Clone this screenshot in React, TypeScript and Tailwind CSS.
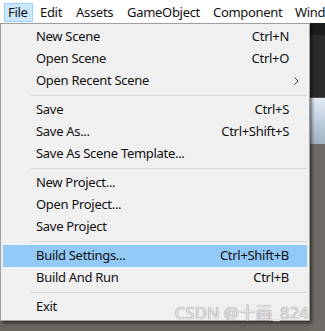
import React from 'react';

type Entry = { label: string; shortcut?: string; sub?: boolean; active?: boolean } | 'sep';

const entries: Entry[] = [
  { label: 'New Scene', shortcut: 'Ctrl+N' },
  { label: 'Open Scene', shortcut: 'Ctrl+O' },
  { label: 'Open Recent Scene', sub: true },
  'sep',
  { label: 'Save', shortcut: 'Ctrl+S' },
  { label: 'Save As...', shortcut: 'Ctrl+Shift+S' },
  { label: 'Save As Scene Template...' },
  'sep',
  { label: 'New Project...' },
  { label: 'Open Project...' },
  { label: 'Save Project' },
  'sep',
  { label: 'Build Settings...', shortcut: 'Ctrl+Shift+B', active: true },
  { label: 'Build And Run', shortcut: 'Ctrl+B' },
  'sep',
  { label: 'Exit' },
];

// menu bar titles with the width each one takes in the bar
const menus = [
  { name: 'File', w: 'w-[29px] mr-[3px]' },
  { name: 'Edit', w: 'w-[36px]' },
  { name: 'Assets', w: 'w-[51px]' },
  { name: 'GameObject', w: 'w-[86px]' },
  { name: 'Component', w: 'w-[82px]' },
  { name: 'Wind', w: 'w-[40px]' },
];

const font = { fontFamily: '"Noto Sans", "Noto Sans CJK SC", sans-serif' };

const App = () => {
  return (
    <div
      className="w-[325px] h-[331px] overflow-hidden flex flex-col bg-[#6b6560] text-[13px] tracking-[-0.3px] text-[#111] relative"
      style={font}
    >
      {/* Menu bar */}
      <div className="h-[23px] bg-white flex items-center pl-[4px] pt-px whitespace-nowrap">
        {menus.map((m, i) => (
          <div
            key={m.name}
            className={`${m.w} shrink-0 h-[19px] flex items-center pl-[3px] leading-none border ${
              i === 0 ? 'bg-[#cce8ff] border-[#99d1ff]' : 'border-transparent'
            }`}
          >
            {m.name}
          </div>
        ))}
      </div>

      <div className="flex flex-1">
        {/* Dropdown */}
        <div className="w-[310px] shrink-0 flex flex-col">
          <div className="bg-[#f0f0f0] border border-[#a0a0a0] p-[2px] shadow-[2px_2px_3px_rgba(0,0,0,0.55)] relative z-10">
            {entries.map((e, i) =>
              e === 'sep' ? (
                <div key={i} className="h-[7px] flex items-center pl-[28px]">
                  <div className="h-px w-full bg-[#d7d7d7]" />
                </div>
              ) : (
                <div
                  key={i}
                  className={`h-[22px] flex items-center justify-between pl-[33px] ${e.sub ? 'pr-[8px]' : 'pr-[18px]'} ${
                    e.active ? 'bg-[#91c9f7]' : ''
                  }`}
                >
                  <span>{e.label}</span>
                  {e.shortcut && <span>{e.shortcut}</span>}
                  {e.sub && (
                    <svg width="5" height="8" viewBox="0 0 5 8" fill="none">
                      <path d="M0.5 0.5 L4 4 L0.5 7.5" stroke="#333" strokeWidth="1" />
                    </svg>
                  )}
                </div>
              )
            )}
          </div>
        </div>

        {/* Editor behind the menu */}
        <div className="flex-1 flex flex-col">
          <div className="h-[12px] bg-[#1c1c1c]" />
          <div className="h-[62px] bg-[#2a2a2a]" />
          <div className="h-px bg-[#555]" />
          <div className="h-[46px] bg-gradient-to-b from-[#e2ecf6] to-[#9fb1c2]" />
          <div className="flex-1 bg-[#6f6a65]" />
        </div>
      </div>

      {/* Watermark */}
      <div
        className="absolute right-[16px] bottom-[10px] text-[16.5px] leading-none text-[#e4e4e4] z-20 tracking-[0.2px]"
        style={{ textShadow: '0 0 1px rgba(80,80,80,0.9)' }}
      >
        CSDN @十画_824
      </div>
    </div>
  );
};

export default App;
